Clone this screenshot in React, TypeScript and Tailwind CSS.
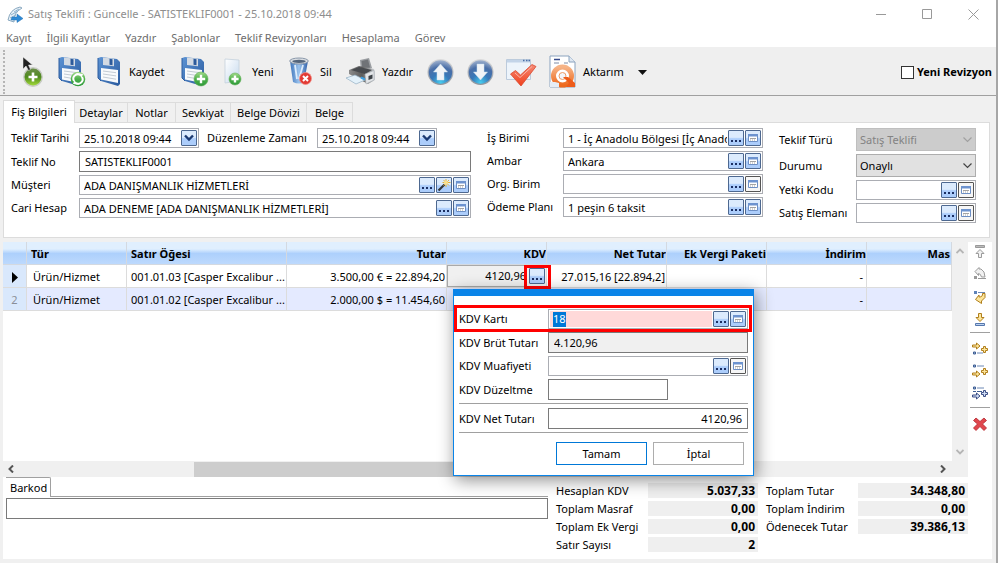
import { useId, type ReactNode } from "react";
import clsx from "clsx";

/* ─── Data ─── */
const menu = ["Kayıt", "İlgili Kayıtlar", "Yazdır", "Şablonlar", "Teklif Revizyonları", "Hesaplama", "Görev"];

const tabs = [
  { name: "Detaylar", width: "w-[53px]" },
  { name: "Notlar", width: "w-12" },
  { name: "Sevkiyat", width: "w-[55px]" },
  { name: "Belge Dövizi", width: "w-[76px]" },
  { name: "Belge", width: "w-[46px]" },
];

const rows = [
  { item: "001.01.03 [Casper Excalibur ...", amount: "3.500,00 € = 22.894,20", net: "27.015,16 [22.894,2]" },
  { item: "001.01.02 [Casper Excalibur ...", amount: "2.000,00 $ = 11.454,60", net: "" },
];

/* ─── Toolbar icons ─── */
function Defs() {
  return (
    <svg className="absolute size-0" aria-hidden>
      <defs>
        <linearGradient id="green" x1="0" y1="0" x2="0" y2="1">
          <stop offset="0" stopColor="#a5dc8c" />
          <stop offset="0.5" stopColor="#4cb04a" />
          <stop offset="1" stopColor="#2f9a3a" />
        </linearGradient>
        <linearGradient id="lime" x1="0" y1="0" x2="0" y2="1">
          <stop offset="0" stopColor="#6e8f4d" />
          <stop offset="0.5" stopColor="#4f8a1d" />
          <stop offset="1" stopColor="#a8e03c" />
        </linearGradient>
        <linearGradient id="disk" x1="0" y1="0" x2="1" y2="1">
          <stop offset="0" stopColor="#5c93d4" />
          <stop offset="1" stopColor="#2a5a9e" />
        </linearGradient>
        <radialGradient id="orb" cx="0.5" cy="0.95" r="0.95">
          <stop offset="0" stopColor="#45cdf0" />
          <stop offset="0.4" stopColor="#3878b8" />
          <stop offset="0.7" stopColor="#4a6fa8" />
          <stop offset="1" stopColor="#a3b4cf" />
        </radialGradient>
        <linearGradient id="ring" x1="0" y1="0" x2="0" y2="1">
          <stop offset="0" stopColor="#dcdcdc" />
          <stop offset="1" stopColor="#8e949c" />
        </linearGradient>
        <linearGradient id="redCheck" x1="0" y1="0" x2="0" y2="1">
          <stop offset="0" stopColor="#f58a76" />
          <stop offset="1" stopColor="#f0401c" />
        </linearGradient>
        <linearGradient id="orange" x1="0" y1="0" x2="0" y2="1">
          <stop offset="0" stopColor="#f6b487" />
          <stop offset="1" stopColor="#ee6a1e" />
        </linearGradient>
        <linearGradient id="bin" x1="0" y1="0" x2="1" y2="0">
          <stop offset="0" stopColor="#3d74bb" />
          <stop offset="0.5" stopColor="#9cc4ee" />
          <stop offset="1" stopColor="#2f5fa8" />
        </linearGradient>
        <linearGradient id="printer" x1="0" y1="0" x2="1" y2="0">
          <stop offset="0" stopColor="#8c8c8c" />
          <stop offset="0.5" stopColor="#5c5c5c" />
          <stop offset="1" stopColor="#d0d4d8" />
        </linearGradient>
        <linearGradient id="paper" x1="0" y1="0" x2="1" y2="1">
          <stop offset="0" stopColor="#ffffff" />
          <stop offset="1" stopColor="#c5d9ee" />
        </linearGradient>
      </defs>
    </svg>
  );
}

function Disk() {
  return (
    <>
      <path d="M1 2l3-1 16 2 3 3v22l-2 2L4 25 1 22z" fill="url(#disk)" />
      <path d="M6 1.500l11 1.300v7.500L6 9z" fill="#d3dae3" />
      <path d="M12.500 2.800l3 .4v6l-3-.4z" fill="#2c5a9b" />
      <path d="M4 12l17 2v13L4 23.500z" fill="#f8fafc" />
      <path d="M6 15l13 1.700M6 18l13 1.900M6 21l13 2.200" stroke="#c3cbd4" strokeWidth="1" />
      <path d="M1 2v20l3 3" fill="none" stroke="#2d5c9f" strokeWidth="1" />
    </>
  );
}

const Plus = ({ cx, cy, r }: { cx: number; cy: number; r: number }) => (
  <>
    <circle cx={cx} cy={cy} r={r} fill="url(#green)" stroke="#5fae57" strokeWidth="0.6" />
    <path
      d={`M${cx - r * 0.6} ${cy}h${r * 1.2}M${cx} ${cy - r * 0.6}v${r * 1.2}`}
      stroke="#fff"
      strokeWidth="2.4"
    />
  </>
);

const AddIcon = () => (
  <svg width="22" height="32" viewBox="0 0 22 32">
    <circle cx="11" cy="21" r="9.2" fill="url(#lime)" stroke="#c9ccc5" strokeWidth="1.4" />
    <path d="M6.500 21h9M11 16.500v9" stroke="#fff" strokeWidth="2.600" />
    <path d="M1 1v12l3-3 2.500 4.500 2-1L6.500 9h4z" fill="#222" stroke="#eee" strokeWidth="0.5" />
  </svg>
);

const SaveRefreshIcon = () => (
  <svg width="28" height="32" viewBox="0 0 28 32">
    <Disk />
    <circle cx="20" cy="23" r="7.300" fill="url(#green)" />
    <path d="M16 25a4.500 4.500 0 0 1 7-5.500" fill="none" stroke="#fff" strokeWidth="2" />
    <path d="M24 21a4.500 4.500 0 0 1-7 5.500" fill="none" stroke="#fff" strokeWidth="2" />
    <path d="M21 17.500l4 .5-1.500 4zM19 28.500l-4-.5 1.500-4z" fill="#fff" />
  </svg>
);

const SaveIcon = () => (
  <svg width="25" height="32" viewBox="0 0 25 32">
    <Disk />
  </svg>
);

const SaveNewIcon = () => (
  <svg width="28" height="32" viewBox="0 0 28 32">
    <Disk />
    <Plus cx={20} cy={23} r={7} />
  </svg>
);

const NewIcon = () => (
  <svg width="22" height="32" viewBox="0 0 22 32">
    <path d="M2 3l14 1v21L2 27z" fill="url(#paper)" stroke="#c4d0dc" strokeWidth="0.8" />
    <Plus cx={12} cy={23} r={6} />
  </svg>
);

const DeleteIcon = () => (
  <svg width="24" height="32" viewBox="0 0 24 32">
    <path d="M1 5l3 21q6 3 11 0l4-21z" fill="url(#bin)" />
    <ellipse cx="10" cy="5" rx="9.300" ry="3" fill="#d9dde2" stroke="#8a98aa" />
    <ellipse cx="10" cy="5.300" rx="6.800" ry="1.600" fill="#53657c" />
    <path d="M6 9l2 14M14 9l-4 14" stroke="#dcecfc" strokeWidth="1.800" />
    <circle cx="16.500" cy="22.500" r="6" fill="#e23b34" stroke="#f08b84" strokeWidth="0.800" />
    <path d="M14 20l5 5M19 20l-5 5" stroke="#fff" strokeWidth="2" />
  </svg>
);

const PrintIcon = () => (
  <svg width="30" height="32" viewBox="0 0 30 32">
    <path d="M15 4l9-2 3 10-11 3z" fill="#9a9da1" />
    <path d="M16.500 5l6.500-1.500 2 8-7.500 1.500z" fill="#707377" />
    <path d="M4 14l10-4 15 3 1 3v8l-7 4L4 18z" fill="url(#printer)" />
    <path d="M6 14l8-3 13 3-7 4z" fill="#484b4f" />
    <path d="M20 18l9-3.500v9.500l-8 4z" fill="#e2e5e8" stroke="#9da3a9" strokeWidth="0.500" />
    <path d="M23.500 20l4-1.500v4l-4 1.500z" fill="#3d4247" />
    <path d="M1 22l9-3 10 5-9 4z" fill="#e3f1fa" stroke="#93afc3" strokeWidth="0.700" />
    <path d="M16 21.500l4 2" stroke="#3fa0e0" strokeWidth="2" />
  </svg>
);

const ArrowIcon = ({ down }: { down?: boolean }) => (
  <svg width="28" height="32" viewBox="0 0 28 32">
    <circle cx="13.500" cy="16" r="13" fill="url(#ring)" />
    <circle cx="13.500" cy="16" r="11.800" fill="url(#orb)" />
    <path
      d="M13.500 8l7 8H17v8h-7v-8H6.500z"
      fill="#f1f4f7"
      stroke="#cfe0ee"
      strokeWidth="0.500"
      transform={down ? "rotate(180 13.500 16)" : undefined}
    />
  </svg>
);

const ApproveIcon = () => (
  <svg width="31" height="32" viewBox="0 0 31 32">
    <path d="M.5 3.500h24v20H.5z" fill="#edf4fb" stroke="#bccbdc" />
    <path d="M1 4h23v2.500H1z" fill="#c3d4e8" />
    <path d="M17 4.500h1.500M20 4.500h1.500M22.500 4.500H24" stroke="#4b6fa8" strokeWidth="1.500" />
    <path d="M4.500 18l5-3.500 5 4.500L26 8.500l4 2L15 30z" fill="url(#redCheck)" stroke="#d9492f" strokeWidth="0.800" />
    <path d="M9 17l5 4.500L26 10.500" fill="none" stroke="#fbb5a8" strokeWidth="1" />
  </svg>
);

const TransferIcon = () => (
  <svg width="27" height="34" viewBox="0 0 27 34">
    <path d="M1 1h19l6 6v25H1z" fill="#fff" stroke="#8ba3be" />
    <path d="M20 1v6h6" fill="#dfe8f2" stroke="#8ba3be" />
    <path d="M5 4.500h6" stroke="#33488a" strokeWidth="1.500" />
    <path d="M5 8h5M15 8h4" stroke="#7d8ba5" />
    <circle cx="13.500" cy="21" r="9" fill="none" stroke="url(#orange)" strokeWidth="5" />
    <circle cx="13.500" cy="21" r="3.500" fill="#f3f6fa" stroke="#ef9a62" />
    <path d="M14 22h5l7 6v4h-9l3-4z" fill="#ee5c1a" />
    <path d="M6 27l4 1v4H1v-5z" fill="#e6edf5" />
  </svg>
);

/* ─── Side strip icons ─── */
const GOLD = { fill: "#fde59a", stroke: "#b07f1c" };
const GRAY = { fill: "#f1f1f1", stroke: "#9b9b9b" };
const NAVY = { fill: "#cfdcf4", stroke: "#3c4f86" };
const CROSS_PATH = "M11.500 4.500h2v2h2v2h-2v2h-2v-2h-2v-2h2z";
const RIGHT_PATH = "M.5 4h4V2l3.500 3-3.500 3V6h-4z";

const SideIcon = ({ children }: { children: ReactNode }) => (
  <svg width="16" height="16" viewBox="0 0 16 16">
    {children}
  </svg>
);

const FirstIcon = () => (
  <SideIcon>
    <path d="M3.500 1.500h9v2h-9z" fill="#bbb" stroke="#999" />
    <path d="M8 5.500l4 4h-2.500v4h-3v-4H4z" {...GRAY} />
  </SideIcon>
);

const UpIcon = () => (
  <SideIcon>
    <path d="M7 1.500L3 5.500l3.500 4V7.500q2 0 3 3.500h3.500q0-6-4-8L7 3z" {...GRAY} />
    <path d="M2 10h3v3H2z" fill="#999" />
    <path d="M6 12.500h8" stroke="#999" />
  </SideIcon>
);

const DownIcon = () => (
  <SideIcon>
    <path d="M2 1h3v3H2z" fill="#5f83b8" />
    <path d="M6 2.500h7" stroke="#6d88b4" />
    <path d="M13 3.500v4L9.500 11v2.500l-6-4L7 5v2q4 0 3.500-3.500z" {...GOLD} />
  </SideIcon>
);

const LastIcon = () => (
  <SideIcon>
    <path d="M6.500 1.500h3v4H12l-4 4-4-4h2.500z" {...GOLD} />
    <path d="M3.500 11.500h9v2h-9z" fill="#bcd2f0" stroke="#5577ad" />
  </SideIcon>
);

const InsertIcon = ({ variant }: { variant: "before" | "after" | "many" }) => {
  const tone = variant === "many" ? NAVY : GOLD;
  return (
    <svg width="18" height="18" viewBox="0 0 18 18">
      {variant === "before" && (
        <>
          <path d={RIGHT_PATH} transform="translate(1 0)" {...tone} />
          <path d="M2.500 11h2v2h-2z" fill="#9db7dd" stroke="#3e5e93" />
          <path d="M6 12h6" stroke="#6d88b4" />
        </>
      )}
      {variant !== "before" && (
        <>
          <path d="M2.500 2h2v2h-2z" fill="#9db7dd" stroke="#3e5e93" />
          <path d="M6 3h7" stroke="#6d88b4" />
          <path d={RIGHT_PATH} transform="translate(1 6)" {...tone} />
        </>
      )}
      {variant === "many" && <path d="M2 6.500h3M6 6.500h5" stroke="#3e5e93" />}
      <path d={CROSS_PATH} transform="translate(1 1)" {...tone} />
    </svg>
  );
};

const RemoveIcon = () => (
  <SideIcon>
    <path
      d="M4 2l4 3.500L12 2l2.500 2.500L10.500 8l4 4-2.500 2.500L8 10.500 4 14.500 1.500 12l4-4-4-3.500z"
      fill="#e0474d"
      stroke="#b3242c"
      strokeWidth="0.800"
    />
  </SideIcon>
);

/* ─── Small controls ─── */
type Action = "dots" | "card" | "cardOff" | "wand" | "drop";

const actionNames: Record<Action, string> = {
  dots: "Seç",
  card: "Kartı aç",
  cardOff: "Kartı aç",
  wand: "Sihirbaz",
  drop: "Takvim",
};

function ActionButton({ kind }: { kind: Action }) {
  return (
    <button
      type="button"
      aria-label={actionNames[kind]}
      className={clsx(
        "flex size-4 shrink-0 items-center justify-center rounded-[1px] border",
        kind === "cardOff"
          ? "border-[#555] bg-[#f6f6f6]"
          : "border-[#4d6890] bg-linear-to-b from-[#dcebfd] from-45% to-[#accdfb] to-55%"
      )}
    >
      <svg width="14" height="14" viewBox="0 0 14 14">
        {kind === "dots" && <path d="M2 9h2v2H2zM6 9h2v2H6zM10 9h2v2h-2z" fill="#1b2f63" />}
        {kind === "drop" && <path d="M3 4.500l4 4 4-4" fill="none" stroke="#1b3a73" strokeWidth="2.400" />}
        {(kind === "card" || kind === "cardOff") && (
          <>
            <path d="M2.500 3.500h9v7h-9z" fill="#fff" stroke="#6d8fc4" />
            <path d="M2 3h10v2.500H2z" fill="#6d93cf" />
            <path d="M4 7.500h6M4 9h1M6 9h1M8 9h1" stroke="#a4a4a4" />
          </>
        )}
        {kind === "wand" && (
          <>
            <path d="M1.500 12.500l6-6" stroke="#33363a" strokeWidth="2.200" />
            <path d="M9 1v8M5.500 4.500h8M6.500 2l5.500 5.500M12 2L6.500 7.500" stroke="#e2b33c" strokeWidth="1" />
            <circle cx="9" cy="4.500" r="2" fill="#fbe08a" />
          </>
        )}
      </svg>
    </button>
  );
}

type FieldProps = {
  label: string;
  labelClass: string;
  value?: string;
  actions?: Action[];
  /* plain text boxes are a pixel taller and darker than the lookups */
  plain?: boolean;
  /* focused box with its whole value selected */
  selected?: boolean;
  boxClass?: string;
  inputClass?: string;
};

function Field({ label, labelClass, value = "", actions = [], plain, selected, boxClass, inputClass }: FieldProps) {
  const id = useId();
  return (
    <div className="flex items-center">
      <label htmlFor={id} className={clsx("shrink-0 whitespace-nowrap", labelClass)}>
        {label}
      </label>
      <div
        className={clsx(
          "flex min-w-0 items-center gap-px border pr-px",
          plain ? "h-[21px] border-[#7a7a7a]" : "h-5 border-[#abadb3]",
          boxClass ?? "flex-1 bg-white"
        )}
      >
        {selected ? (
          <div className="ml-px flex h-4 min-w-0 flex-1 items-center bg-[#ffd9d9] pl-[3px]">
            <input
              id={id}
              defaultValue={value}
              className="h-[15px] w-[13px] bg-[#0078d7] text-white outline-none"
            />
          </div>
        ) : (
          <input
            id={id}
            defaultValue={value}
            className={clsx("h-full min-w-0 flex-1 outline-none", inputClass ?? "pl-1")}
          />
        )}
        {actions.map((kind) => (
          <ActionButton key={kind} kind={kind} />
        ))}
      </div>
    </div>
  );
}

function SelectField({ label, value, disabled }: { label: string; value: string; disabled?: boolean }) {
  const id = useId();
  return (
    <div className="flex items-center">
      <label htmlFor={id} className="w-[77px] shrink-0">
        {label}
      </label>
      <div className="relative min-w-0 flex-1">
        <select
          id={id}
          disabled={disabled}
          className={clsx(
            "block h-[23px] w-full appearance-none border px-[3px] opacity-100",
            disabled ? "border-[#bfbfbf] bg-[#cccccc] text-[#838383]" : "border-[#adadad] bg-[#e1e1e1]"
          )}
        >
          <option>{value}</option>
        </select>
        <svg className="pointer-events-none absolute top-2 right-1" width="9" height="7" viewBox="0 0 9 7">
          <path d="M.5 1.500l4 4 4-4" fill="none" stroke={disabled ? "#a0a0a0" : "#444"} strokeWidth="1.200" />
        </svg>
      </div>
    </div>
  );
}

type ToolProps = { icon: ReactNode; name: string; showName?: boolean; className?: string };

const ToolButton = ({ icon, name, showName, className }: ToolProps) => (
  <button
    type="button"
    aria-label={showName ? undefined : name}
    className={clsx("flex shrink-0 items-center gap-[7px]", className)}
  >
    {icon}
    {showName && <span>{name}</span>}
  </button>
);

const Total = ({ label, value }: { label: string; value: string }) => (
  <div className="flex h-[15px] items-center">
    <dt className="w-[92px] whitespace-nowrap">{label}</dt>
    <dd className="h-[15px] w-[110px] bg-[#efefef] pr-[3px] text-right text-[12px] leading-[15px] font-bold">{value}</dd>
  </div>
);

/* ─── Page sections ─── */
function TitleBar() {
  return (
    <header className="bg-white">
      <div className="flex h-7 items-center pl-[7px] text-[#8e8e8e]">
        <svg width="17" height="17" viewBox="0 0 17 17" aria-hidden>
          <path d="M13 1Q3 3 1 14l6 2Q6 7 15 2z" fill="#e8f1f8" stroke="#8aa9c0" />
          <path d="M4 9l7-4M3 12l6-3M7 6l5-3" stroke="#8fb3cf" />
          <path d="M5 11h5V8l6 4.500-6 4v-2.500H4z" fill="#2e8ad6" stroke="#2570b0" strokeWidth="0.500" />
        </svg>
        <h1 className="ml-1 flex-1">Satış Teklifi : Güncelle - SATISTEKLIF0001 - 25.10.2018 09:44</h1>
        <div className="flex items-center gap-[35px] pr-[17px]">
          <button type="button" aria-label="Simge durumuna küçült">
            <svg width="11" height="11" viewBox="0 0 11 11">
              <path d="M0 5.500h10" stroke="#999" />
            </svg>
          </button>
          <button type="button" aria-label="Ekranı kapla">
            <svg width="11" height="11" viewBox="0 0 11 11">
              <path d="M.5.500h9v9h-9z" fill="none" stroke="#999" />
            </svg>
          </button>
          <button type="button" aria-label="Kapat">
            <svg width="11" height="11" viewBox="0 0 11 11">
              <path d="M.5.500l10 10M10.500.500l-10 10" stroke="#999" />
            </svg>
          </button>
        </div>
      </div>
      <nav className="flex h-[19px] items-center gap-[15px] pl-1.5 text-[#6d6d6d]">
        {menu.map((item) => (
          <button key={item} type="button">
            {item}
          </button>
        ))}
      </nav>
    </header>
  );
}

function Toolbar() {
  return (
    <div className="flex h-[49px] items-center border-b border-[#a0a0a0] bg-[#efefef] pt-0.5 pr-1">
      <div className="ml-[3px] h-11 w-0.5 border-l-2 border-dotted border-[#b5b5b5]" />
      <ToolButton className="ml-[17px]" icon={<AddIcon />} name="Ekle" />
      <ToolButton className="ml-3.5" icon={<SaveRefreshIcon />} name="Kaydet ve yenile" />
      <ToolButton className="ml-[11px] w-[84px]" icon={<SaveIcon />} name="Kaydet" showName />
      <ToolButton icon={<SaveNewIcon />} name="Kaydet ve yeni" />
      <ToolButton className="ml-3.5 w-[66px]" icon={<NewIcon />} name="Yeni" showName />
      <ToolButton className="w-14" icon={<DeleteIcon />} name="Sil" showName />
      <ToolButton className="w-[82px]" icon={<PrintIcon />} name="Yazdır" showName />
      <ToolButton icon={<ArrowIcon />} name="Önceki" />
      <ToolButton className="ml-3" icon={<ArrowIcon down />} name="Sonraki" />
      <ToolButton className="ml-[11px]" icon={<ApproveIcon />} name="Onayla" />
      <ToolButton className="ml-3 w-[89px]" icon={<TransferIcon />} name="Aktarım" showName />
      <button type="button" aria-label="Aktarım seçenekleri">
        <svg width="9" height="5" viewBox="0 0 9 5">
          <path d="M0 0h9L4.500 5z" fill="#111" />
        </svg>
      </button>
      <label className="ml-auto flex items-center gap-[3px] font-bold whitespace-nowrap">
        <input type="checkbox" className="size-[13px] appearance-none border border-[#333] bg-white" />
        Yeni Revizyon
      </label>
    </div>
  );
}

function SlipForm() {
  return (
    <section className="mr-1.5 ml-[3px]">
      <div role="tablist" className="flex items-end pt-1">
        <button
          type="button"
          role="tab"
          aria-selected
          className="relative z-10 -mb-px h-[23px] w-[72px] border border-b-0 border-[#dcdcdc] bg-white text-center whitespace-nowrap"
        >
          Fiş Bilgileri
        </button>
        {tabs.map((tab) => (
          <button
            key={tab.name}
            type="button"
            role="tab"
            aria-selected={false}
            className={clsx("h-5 border-t border-r border-[#dcdcdc] text-center whitespace-nowrap", tab.width)}
          >
            {tab.name}
          </button>
        ))}
      </div>
      <div className="grid grid-cols-[minmax(0,460fr)_minmax(0,276fr)_minmax(0,197fr)] gap-4 border border-[#dcdcdc] bg-white pt-[5px] pr-[13px] pb-[14px] pl-[7px]">
        <div className="flex flex-col gap-[3px]">
          <div className="flex items-center gap-2">
            <Field label="Teklif Tarihi" labelClass="w-[68px]" value="25.10.2018 09:44" actions={["drop"]} boxClass="w-[120px]" />
            <Field label="Düzenleme Zamanı" labelClass="w-[110px]" value="25.10.2018 09:44" actions={["drop"]} boxClass="w-[120px]" />
          </div>
          <Field label="Teklif No" labelClass="w-[68px]" value="SATISTEKLIF0001" plain inputClass="pl-[5px]" />
          <Field label="Müşteri" labelClass="w-[68px]" value="ADA DANIŞMANLIK HİZMETLERİ" actions={["dots", "wand", "card"]} />
          <Field label="Cari Hesap" labelClass="w-[68px]" value="ADA DENEME [ADA DANIŞMANLIK HİZMETLERİ]" actions={["dots", "card"]} />
        </div>
        <div className="flex flex-col gap-[3px]">
          <Field label="İş Birimi" labelClass="w-[76px]" value="1 - İç Anadolu Bölgesi [İç Anadolu" actions={["dots", "card"]} />
          <Field label="Ambar" labelClass="w-[76px]" value="Ankara" actions={["dots", "card"]} />
          <Field label="Org. Birim" labelClass="w-[76px]" actions={["dots", "cardOff"]} />
          <Field label="Ödeme Planı" labelClass="w-[76px]" value="1 peşin 6 taksit" actions={["dots", "card"]} />
        </div>
        <div className="flex flex-col gap-[3px]">
          <SelectField label="Teklif Türü" value="Satış Teklifi" disabled />
          <SelectField label="Durumu" value="Onaylı" />
          <Field label="Yetki Kodu" labelClass="w-[77px]" actions={["dots", "cardOff"]} />
          <Field label="Satış Elemanı" labelClass="w-[77px]" actions={["dots", "cardOff"]} />
        </div>
      </div>
    </section>
  );
}

function VatDialog() {
  return (
    <div
      role="dialog"
      aria-label="KDV"
      className="absolute top-[47px] left-[450px] z-20 w-[301px] border border-t-[7px] border-[#0a84e8] bg-white px-[5px] pt-[13px] pb-[10px] shadow-[2px_4px_16px_rgba(0,0,0,0.45)]"
    >
      <div className="flex flex-col gap-[3px]">
        <div className="relative">
          <Field label="KDV Kartı" labelClass="w-[89px]" value="18" actions={["dots", "card"]} selected />
          <div className="pointer-events-none absolute -top-1 -right-1 -bottom-[3px] -left-[5px] border-[3px] border-[#ff0000]" />
        </div>
        <Field label="KDV Brüt Tutarı" labelClass="w-[89px]" value="4.120,96" plain boxClass="flex-1 bg-[#f0f0f0]" inputClass="pl-[5px]" />
        <Field label="KDV Muafiyeti" labelClass="w-[89px]" actions={["dots", "cardOff"]} />
        <Field label="KDV Düzeltme" labelClass="w-[89px]" plain boxClass="w-[120px]" />
      </div>
      <hr className="mt-[3px] mb-1 border-[#a0a0a0]" />
      <Field label="KDV Net Tutarı" labelClass="w-[89px]" value="4120,96" plain inputClass="pr-1 text-right" />
      <hr className="mt-[3px] mb-[9px] border-[#a0a0a0]" />
      <div className="flex justify-end gap-1.5 pr-1">
        <button type="button" className="h-[23px] w-[91px] border border-[#0078d7]">
          Tamam
        </button>
        <button type="button" className="h-[23px] w-[91px] border border-[#adadad]">
          İptal
        </button>
      </div>
    </div>
  );
}

function LineGrid() {
  const cell = "h-[23px] truncate border-r border-b border-[#dcdcdc]";
  const head = "h-[23px] truncate border-r border-b border-[#d4d9e0] pt-px";
  const textCell = clsx(cell, "pt-0.5");
  return (
    <div className="relative flex">
      <div className="min-w-0 flex-1">
        <div className="flex">
          <div className="h-[219px] min-w-0 flex-1 overflow-hidden bg-white">
            <table className="w-full table-fixed border-separate border-spacing-0">
              <colgroup>
                <col className="w-6" />
                <col className="w-[100px]" />
                <col className="w-40" />
                <col className="w-40" />
                <col className="w-[100px]" />
                <col className="w-[120px]" />
                <col className="w-[100px]" />
                <col className="w-[100px]" />
                <col />
              </colgroup>
              <thead>
                <tr className="bg-linear-to-b from-[#e0effe] from-30% via-[#add0fc] via-50% to-[#bedafd] font-bold">
                  <th className={head} />
                  <th className={clsx(head, "pl-1 text-left")}>Tür</th>
                  <th className={clsx(head, "pl-1 text-left")}>Satır Öğesi</th>
                  <th className={clsx(head, "text-right")}>Tutar</th>
                  <th className={clsx(head, "text-right")}>KDV</th>
                  <th className={clsx(head, "text-right")}>Net Tutar</th>
                  <th className={clsx(head, "text-right")}>Ek Vergi Paketi</th>
                  <th className={clsx(head, "text-right")}>İndirim</th>
                  <th className={clsx(head, "pr-px text-right")}>Mas</th>
                </tr>
              </thead>
              <tbody>
                {rows.map((row, i) => (
                  <tr key={row.item} className={i === 1 ? "bg-[#e4eaff]" : "bg-white"}>
                    <td className={clsx(textCell, "bg-[#d9e8fc] text-center text-[#8a8f98]")}>
                      {i === 0 ? (
                        <svg className="mx-auto" width="6" height="11" viewBox="0 0 6 11">
                          <path d="M0 0l6 5.500L0 11z" fill="#000" />
                        </svg>
                      ) : (
                        i + 1
                      )}
                    </td>
                    <td className={clsx(textCell, "pl-1.5")}>Ürün/Hizmet</td>
                    <td className={clsx(textCell, "pl-1")}>{row.item}</td>
                    <td className={clsx(textCell, "pr-px text-right")}>{row.amount}</td>
                    <td className={cell}>
                      {i === 0 && (
                        <div className="flex h-[22px] items-center border border-r-0 border-[#a9a9a9] bg-[#f0f0f0] pr-px">
                          <input aria-label="KDV" defaultValue="4120,96" className="min-w-0 flex-1 pr-[3px] text-right outline-none" />
                          <ActionButton kind="dots" />
                        </div>
                      )}
                    </td>
                    <td className={clsx(textCell, "pr-px text-right")}>{row.net}</td>
                    <td className={cell} />
                    <td className={clsx(textCell, "pr-[3px] text-right")}>-</td>
                    <td className={cell} />
                  </tr>
                ))}
              </tbody>
            </table>
          </div>
          <div className="flex w-4 flex-col items-center justify-between bg-[#f0f0f0] py-1.5">
            <svg width="8" height="6" viewBox="0 0 8 6">
              <path d="M.5 5L4 1.500 7.500 5" fill="none" stroke="#b5b5b5" strokeWidth="1.800" />
            </svg>
            <svg width="8" height="6" viewBox="0 0 8 6">
              <path d="M.5 1L4 4.500 7.500 1" fill="none" stroke="#b5b5b5" strokeWidth="1.800" />
            </svg>
          </div>
        </div>
        <div className="flex h-4 items-center bg-[#f0f0f0] pr-[22px] pl-[5px]">
          <svg width="6" height="8" viewBox="0 0 6 8">
            <path d="M5 .5L1.500 4 5 7.500" fill="none" stroke="#555" strokeWidth="2" />
          </svg>
          <div className="mr-[320px] ml-[180px] h-[15px] flex-1 bg-[#cdcdcd]" />
          <svg width="6" height="8" viewBox="0 0 6 8">
            <path d="M1 .5L4.500 4 1 7.500" fill="none" stroke="#555" strokeWidth="2" />
          </svg>
        </div>
      </div>
      <aside className="flex w-6 flex-col items-center bg-white pt-0.5">
        <button type="button" aria-label="Başa taşı"><FirstIcon /></button>
        <button type="button" aria-label="Yukarı taşı" className="mt-1.5"><UpIcon /></button>
        <button type="button" aria-label="Aşağı taşı" className="mt-2"><DownIcon /></button>
        <button type="button" aria-label="Sona taşı" className="mt-1.5"><LastIcon /></button>
        <hr className="mt-1 w-5 border-[#a0a0a0]" />
        <button type="button" aria-label="Öncesine ekle" className="mt-2"><InsertIcon variant="before" /></button>
        <button type="button" aria-label="Sonrasına ekle" className="mt-1"><InsertIcon variant="after" /></button>
        <button type="button" aria-label="Toplu ekle" className="mt-1"><InsertIcon variant="many" /></button>
        <hr className="mt-1 w-5 border-[#a0a0a0]" />
        <button type="button" aria-label="Satırı sil" className="mt-2"><RemoveIcon /></button>
      </aside>

      {/* Highlight around the open cell button */}
      <div className="pointer-events-none absolute top-[23px] left-[521px] h-6 w-[27px] border-[3px] border-[#ff0000]" />
      <VatDialog />
    </div>
  );
}

function Footer() {
  return (
    <footer className="flex flex-1 bg-white">
      <div className="ml-[3px] min-w-0 flex-1">
        <div className="flex">
          <label htmlFor="barcode" className="h-5 w-[45px] rounded-tr-[2px] border-t border-r border-[#a0a0a0] pl-1 leading-5">
            Barkod
          </label>
          <div className="flex-1 border-b border-[#a0a0a0]" />
        </div>
        <input id="barcode" className="mt-px block h-[21px] w-full border border-[#7a7a7a] px-1 outline-none" />
      </div>
      <dl className="mt-1.5 ml-2 flex flex-col gap-[3px]">
        <Total label="Hesaplan KDV" value="5.037,33" />
        <Total label="Toplam Masraf" value="0,00" />
        <Total label="Toplam Ek Vergi" value="0,00" />
        <Total label="Satır Sayısı" value="2" />
      </dl>
      <dl className="mt-1.5 mr-6 ml-2 flex flex-col gap-[3px]">
        <Total label="Toplam Tutar" value="34.348,80" />
        <Total label="Toplam İndirim" value="0,00" />
        <Total label="Ödenecek Tutar" value="39.386,13" />
      </dl>
    </footer>
  );
}

export default function App() {
  return (
    <div className="flex min-h-screen flex-col border-r-2 border-[#a6a6a6] bg-[#f0f0f0] font-['Noto_Sans',sans-serif] text-[11px] leading-4 text-black">
      <Defs />
      <TitleBar />
      <Toolbar />
      <SlipForm />
      <main className="mt-1 mr-1 mb-1 ml-[3px] flex flex-1 flex-col">
        <LineGrid />
        <Footer />
      </main>
    </div>
  );
}
